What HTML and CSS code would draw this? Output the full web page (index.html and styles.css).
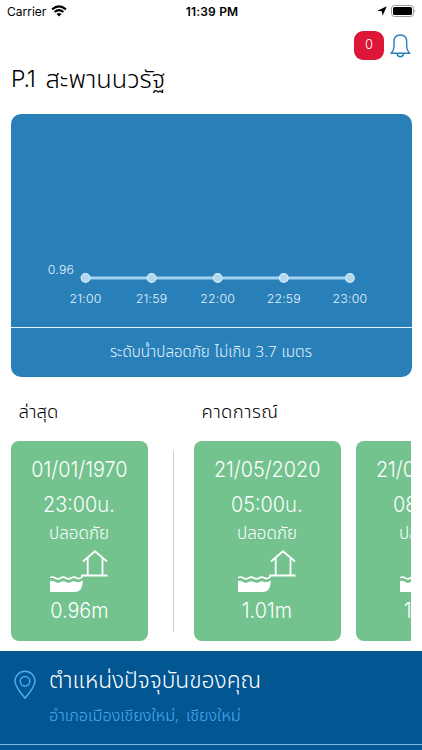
FILE: index.html
```html
<!DOCTYPE html>
<html lang="th">
<head>
  <meta charset="UTF-8">
  <meta name="viewport" content="width=device-width, initial-scale=1.0">
  <title>P.1 สะพานนวรัฐ</title>
  <link rel="stylesheet" href="styles.css">
</head>
<body>
  <!-- shared water level icon -->
  <svg class="sprite" width="0" height="0" aria-hidden="true">
    <symbol id="water-level" viewBox="0 0 58 42">
      <path d="M33 11.5 45 1.2 57 11.5M37.7 8V25.5M52.5 8V25.5M31.5 25.5H57.5" fill="none" stroke="#fff" stroke-width="1.8"/>
      <path d="M0 27.5Q2.7 26.3 5.3 28T10.6 28T15.9 28T21.2 28T26.5 28Q29.5 29.5 32 27V25" fill="none" stroke="#fff" stroke-width="1.6"/>
      <path d="M0 31Q2.7 30.3 5.3 32T10.6 32T15.9 32T21.2 32T26.5 32Q29 32.8 32.6 30.5V27V33Q32 42 24.5 42H0Z" fill="#fff"/>
    </symbol>
  </svg>

  <header class="status-bar">
    <div class="carrier">
      <span>Carrier</span>
      <svg width="16" height="12" viewBox="0 0 16 12">
        <path d="M1.1 4.3Q8-1.6 14.9 4.3M3.6 7Q8 3.2 12.4 7" fill="none" stroke="#000" stroke-width="2.2"/>
        <path d="M5.5 9Q8 6.8 10.5 9L8 11.5Z"/>
      </svg>
    </div>
    <span class="clock">11:39 PM</span>
    <div class="device">
      <svg width="10" height="10" viewBox="0 0 10 10"><path d="M9.8.2 5.6 9.8 4.8 5.3.2 4.7Z"/></svg>
      <svg width="26" height="12" viewBox="0 0 26 12">
        <rect x=".5" y=".5" width="22" height="11" rx="3" fill="none" stroke="#999"/>
        <rect x="2" y="2" width="19" height="8" rx="1.5"/>
        <path d="M23.7 4.2Q25.4 6 23.7 7.8Z" fill="#999"/>
      </svg>
    </div>
  </header>

  <div class="actions">
    <span class="badge">0</span>
    <svg width="21" height="24" viewBox="0 0 21 24" fill="none" stroke="#2980b9" stroke-width="1.4" stroke-linejoin="round">
      <path d="M1 19.2C3.2 17.2 4 15 4 11.5V8C4 3.5 6.4 1 10.3 1S16.7 3.5 16.7 8V11.5C16.7 15 17.5 17.2 19.7 19.2Z"/>
      <path d="M7 19.4Q7.3 22.7 10.3 22.7T13.7 19.4"/>
    </svg>
  </div>

  <h1><span class="code">P.1</span><span>สะพานนวรัฐ</span></h1>

  <section class="chart-card">
    <svg class="chart" width="401" height="213" viewBox="0 0 401 213">
      <path d="M74.5 164H338.5" stroke="#a6d2f1" stroke-width="3"/>
      <g fill="#b3d6ef" stroke="#d6eefe" stroke-width="1.2">
        <circle cx="74.5" cy="164" r="4.3"/>
        <circle cx="140.6" cy="164" r="4.3"/>
        <circle cx="206.7" cy="164" r="4.3"/>
        <circle cx="272.8" cy="164" r="4.3"/>
        <circle cx="338.9" cy="164" r="4.3"/>
      </g>
      <g class="axis">
        <text x="50" y="160">0.96</text>
        <text x="74.5" y="188.6">21:00</text>
        <text x="140.6" y="188.6">21:59</text>
        <text x="206.7" y="188.6">22:00</text>
        <text x="272.8" y="188.6">22:59</text>
        <text x="338.9" y="188.6">23:00</text>
      </g>
    </svg>
    <p class="safe-level">ระดับน้ำปลอดภัย ไม่เกิน 3.7 เมตร</p>
  </section>

  <div class="levels">
    <section class="latest">
      <h2>ล่าสุด</h2>
      <article class="card">
        <p class="date">01/01/1970</p>
        <p class="time">23:00น.</p>
        <p class="state">ปลอดภัย</p>
        <svg class="icon" width="58" height="42"><use href="#water-level"/></svg>
        <p class="value">0.96m</p>
      </article>
    </section>
    <div class="divider"></div>
    <section class="forecast">
      <h2>คาดการณ์</h2>
      <div class="card-list">
        <article class="card">
          <p class="date">21/05/2020</p>
          <p class="time">05:00น.</p>
          <p class="state">ปลอดภัย</p>
          <svg class="icon" width="58" height="42"><use href="#water-level"/></svg>
          <p class="value">1.01m</p>
        </article>
        <article class="card">
          <p class="date">21/05/2020</p>
          <p class="time">08:00น.</p>
          <p class="state">ปลอดภัย</p>
          <svg class="icon" width="58" height="42"><use href="#water-level"/></svg>
          <p class="value">1.01m</p>
        </article>
      </div>
    </section>
  </div>

  <footer class="location">
    <div class="location-row">
      <svg width="24" height="30" viewBox="0 0 24 30" fill="none" stroke="#4cacf5" stroke-width="1.5">
        <path d="M12 28.2C7.5 23 2 16.5 2 11.3A10 10 0 0 1 22 11.3C22 16.5 16.5 23 12 28.2Z"/>
        <circle cx="12" cy="11.3" r="4.8"/>
      </svg>
      <div>
        <p class="place-title">ตำแหน่งปัจจุบันของคุณ</p>
        <p class="place">อำเภอเมืองเชียงใหม่, เชียงใหม่</p>
      </div>
    </div>
  </footer>
</body>
</html>
```
FILE: styles.css
```css
* {
  box-sizing: border-box;
}
body {
  margin: 0;
  height: 750px;
  overflow: hidden;
  background-color: #fff;
  color: #000;
  font-family: 'Noto Sans', 'Noto Sans Thai', 'Open Sans', sans-serif;
  font-weight: 300;
}
h1, h2, p {
  margin: 0;
  font-weight: 300;
  white-space: nowrap;
}
.sprite {
  display: block;
}
.status-bar {
  display: grid;
  grid-template-columns: 1fr auto 1fr;
  align-items: center;
  height: 22px;
  padding: 0 5px 0 7px;
  font-family: Inter, sans-serif;
  font-size: 12px;
  font-weight: 400;
}
.carrier {
  display: flex;
  align-items: center;
  gap: 5px;
}
.clock {
  font-weight: 600;
  letter-spacing: 0.2px;
}
.device {
  display: flex;
  justify-content: flex-end;
  align-items: center;
  gap: 4px;
}
.actions {
  display: flex;
  justify-content: flex-end;
  gap: 6px;
  height: 38px;
  padding: 9px 11px 0 0;
}
.actions svg {
  margin-top: 3px;
}
.badge {
  width: 30px;
  height: 29px;
  border-radius: 9px;
  background-color: #dc1737;
  color: #fff;
  font-family: Inter, sans-serif;
  font-size: 13px;
  line-height: 27px;
  text-align: center;
}
h1 {
  display: flex;
  height: 54px;
  padding-left: 11px;
  font-size: 25.4px;
  font-weight: 350;
  line-height: 37px;
}
.code {
  width: 34.5px;
  font-family: Inter, sans-serif;
  font-size: 23px;
  font-weight: 300;
  letter-spacing: -1.2px;
  line-height: 39px;
}
.chart-card {
  width: 401px;
  height: 263px;
  margin-left: 10.5px;
  border-radius: 10px;
  background-color: #2980b9;
  color: #e3f4ff;
}
.chart {
  display: block;
}
.axis {
  fill: #e3f4ff;
  font-family: Inter, sans-serif;
  font-size: 12.3px;
  font-weight: 350;
  letter-spacing: 0.2px;
  text-anchor: middle;
}
.safe-level {
  height: 50px;
  border-top: 1.5px solid #e3f4ff;
  font-size: 15.2px;
  font-weight: 350;
  line-height: 46px;
  text-align: center;
  word-spacing: 1px;
}
.levels {
  display: flex;
  height: 274px;
  padding: 14px 11px 0 10.5px;
}
h2 {
  height: 50px;
  padding-left: 8px;
  font-size: 18.5px;
  font-weight: 350;
  line-height: 40px;
}
.forecast h2 {
  letter-spacing: 0.4px;
}
.latest .card {
  width: 137px;
}
.divider {
  width: 1px;
  height: 181px;
  margin: 60px 20px 0 25px;
  background-color: #ccc;
}
.forecast {
  flex: 1;
  min-width: 0;
  overflow: hidden;
}
.card-list {
  display: flex;
  gap: 15px;
}
.card {
  display: flex;
  flex-direction: column;
  flex-shrink: 0;
  align-items: center;
  width: 147px;
  height: 200px;
  padding-top: 9px;
  border-radius: 8px;
  background-color: #74c38f;
  color: #fff;
}
.date, .time, .value {
  font-family: Inter, 'Noto Sans', 'Noto Sans Thai', sans-serif;
  font-size: 22px;
  transform: scaleX(0.9);
}
.date, .time {
  height: 35px;
  line-height: 38px;
}
.state {
  height: 30px;
  font-size: 17px;
  line-height: 26px;
}
.icon {
  flex-shrink: 0;
}
.value {
  line-height: 36px;
}
.location {
  height: 99px;
  background-color: #025691;
}
.location-row {
  display: flex;
  gap: 12px;
  height: 94px;
  padding: 12px 0 0 13px;
  border-bottom: 1px solid #7fb2dc;
}
.location svg {
  margin-top: 7px;
}
.place-title {
  height: 37px;
  color: #fff;
  font-size: 22.8px;
  font-weight: 350;
  line-height: 34px;
}
.place {
  color: #4cacf5;
  font-size: 16.2px;
  font-weight: 350;
  line-height: 31px;
  word-spacing: 3px;
}
```
